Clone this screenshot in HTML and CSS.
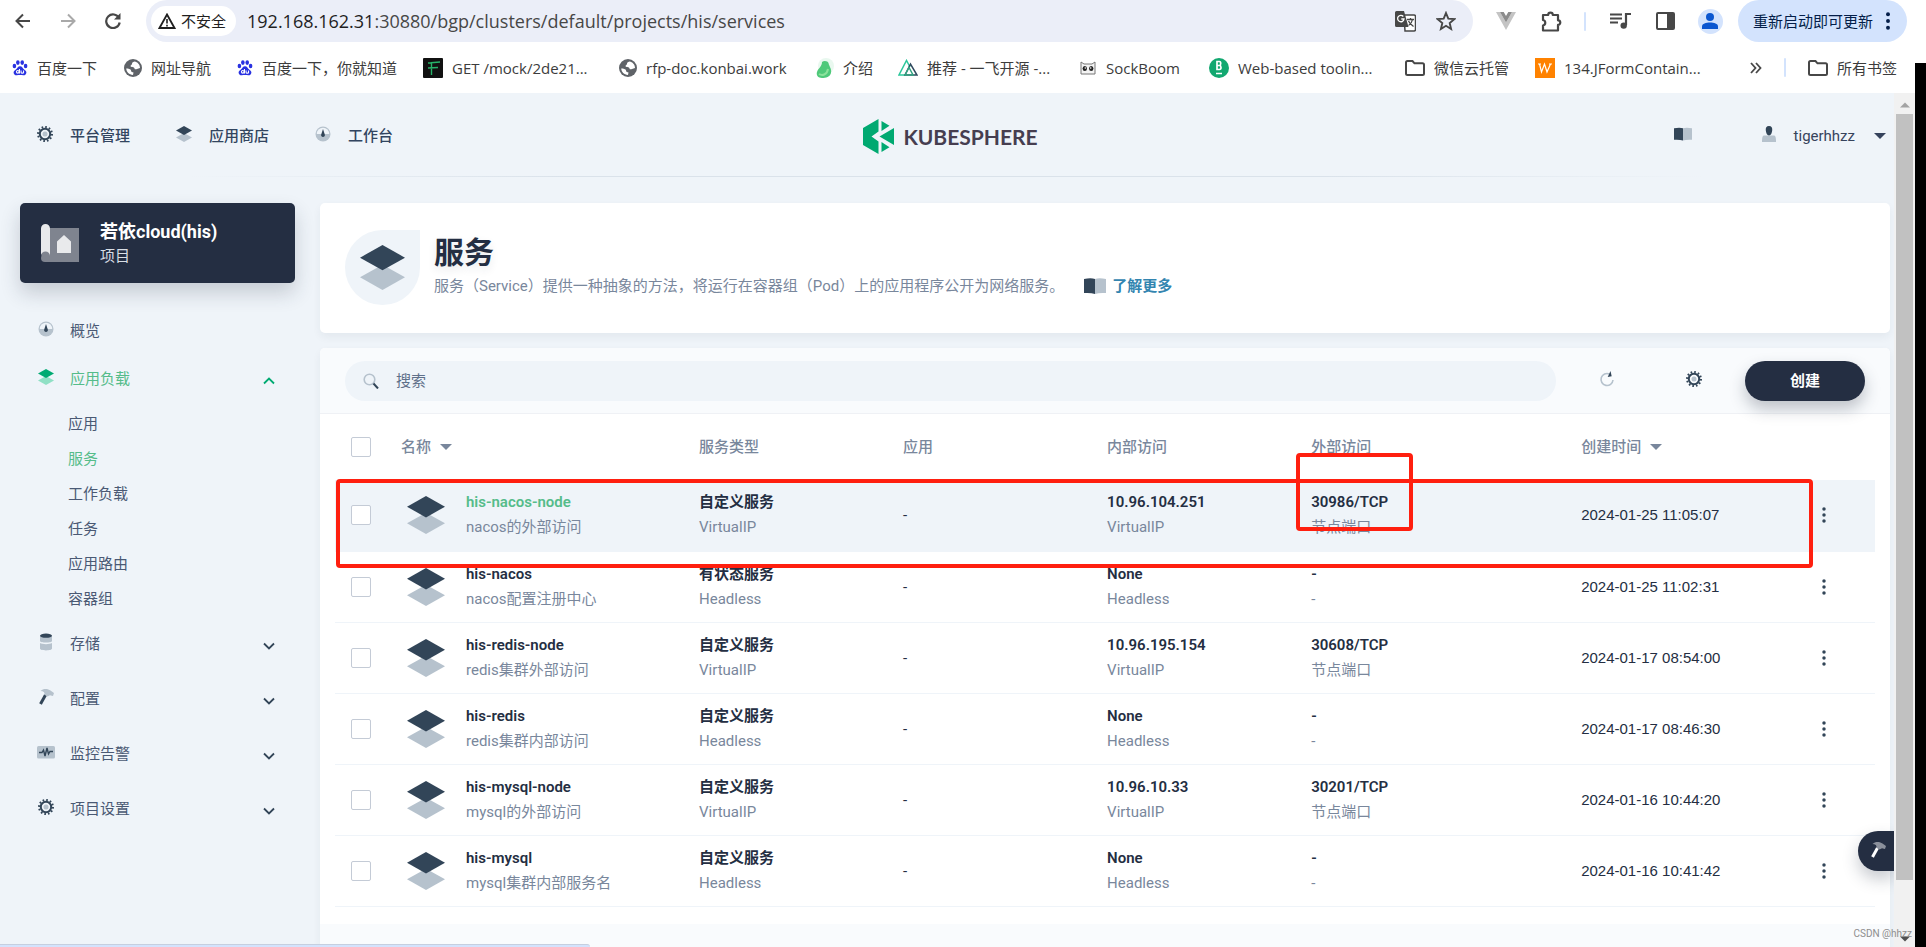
FILE: index.html
```html
<!DOCTYPE html>
<html lang="zh-CN">
<head>
<meta charset="utf-8">
<title>服务 - KubeSphere</title>
<link rel="stylesheet" href="styles.css">
</head>
<body>
<svg class="defs" aria-hidden="true">
  <symbol id="layers" viewBox="0 0 48 48"><path fill="var(--light)" d="M24 21 48 34.500 24 48 0 34.500z"/><path fill="var(--dark)" d="M24 0 48 13.500 24 27 0 13.500z"/></symbol>
  <symbol id="gear" viewBox="0 0 16 16"><circle cx="8" cy="8" r="7" fill="none" stroke="var(--dark)" stroke-width="2" stroke-dasharray="1.660 2.005"/><circle cx="8" cy="8" r="5.200" fill="none" stroke="var(--dark)" stroke-width="2"/><circle cx="8" cy="8" r="2.500" fill="var(--light)"/></symbol>
  <symbol id="dash" viewBox="0 0 16 16"><circle cx="8" cy="8" r="7.500" fill="var(--light)"/><path d="M1.800 8a6.200 6.200 0 0 1 12.400 0z" fill="#eff4f9"/><path d="M8 3l1.800 5.500a1.900 1.900 0 1 1-3.600 0z" fill="var(--dark)"/></symbol>
  <symbol id="book" viewBox="0 0 22 16"><path fill="var(--dark)" d="M0 1Q7-.5 11 1v15Q7 14.500 0 15z"/><path fill="var(--light)" d="M22 1q-7-1.500-11 0v15q4-1.500 11-1z"/></symbol>
  <symbol id="user" viewBox="0 0 16 16"><path fill="var(--light)" d="M3.500 9.500h9c2 0 2.500 1.500 2.500 6.500H1c0-5 .5-6.500 2.500-6.500z"/><path fill="var(--dark)" d="M8 0c2.600 0 3.600 2 3.200 4.500C10.900 7 10 9.500 8 9.500S5.100 7 4.800 4.500C4.400 2 5.400 0 8 0z"/></symbol>
  <symbol id="disk" viewBox="0 0 18 18"><path fill="var(--light)" d="M3 3v5c0 2 12 2 12 0V3zM3 10v5.500c0 2.500 12 2.500 12 0V10c-2 1.500-10 1.500-12 0z"/><ellipse cx="9" cy="2.700" rx="6" ry="2.100" fill="var(--dark)"/></symbol>
  <symbol id="hammer" viewBox="0 0 18 18"><path d="M8.500 7 3.500 16" stroke="var(--dark)" stroke-width="3"/><path fill="var(--light)" d="M3.500 3C6 .2 11 .5 13.500 2.500L17 5l-1 3-3-.8-2.500 1.300-3-1.800C8 4.500 6.500 3 3.500 3z"/></symbol>
  <symbol id="monitor" viewBox="0 0 18 18"><rect y="3" width="18" height="12.500" rx="1.500" fill="var(--light)"/><path d="M2 9.500h3L6.500 7 8 13 10 5l1.500 6L13 8.500h3" fill="none" stroke="var(--dark)" stroke-width="1.400"/></symbol>
  <symbol id="chev" viewBox="0 0 12 8"><path d="M1 1.500 6 6.500 11 1.500" fill="none" stroke="currentColor" stroke-width="1.800"/></symbol>
  <symbol id="caret" viewBox="0 0 12 6"><path d="M0 0h12L6 6z" fill="currentColor"/></symbol>
  <symbol id="dots" viewBox="0 0 16 16"><g fill="currentColor"><circle cx="8" cy="2" r="1.750"/><circle cx="8" cy="8" r="1.750"/><circle cx="8" cy="14" r="1.750"/></g></symbol>
  <symbol id="globe" viewBox="0 0 18 18"><circle cx="9" cy="9" r="9" fill="#5f6368"/><path fill="#fff" d="M10.500 2.500c-2 .5-2.500 1-2.500 2.500 0 1-1.500 1-1.500 2 0 1.500 4 .5 4 2.500 0 1 1.500 1 2.500.5s2-.5 3-1C16 5.500 13.500 3 10.500 2.500zM2.200 9.500C2.500 13 5 15.800 9 15.900l.5-2.400c-1-.5-2.500-.5-2.500-2C7 10 4 9.500 2.200 9.500z"/></symbol>
  <symbol id="folder" viewBox="0 0 20 16"><path d="M1 2.500C1 1.700 1.700 1 2.500 1H7.500l2 2.300h8c.9 0 1.500.6 1.500 1.500v8.700c0 .9-.6 1.500-1.500 1.500h-15C1.700 15 1 14.300 1 13.500z" fill="none" stroke="#474747" stroke-width="2"/></symbol>
  <symbol id="paw" viewBox="0 0 18 18"><g fill="#2932e1"><ellipse cx="2.700" cy="6.800" rx="2" ry="2.600"/><ellipse cx="6.600" cy="2.900" rx="2" ry="2.700"/><ellipse cx="11.500" cy="2.900" rx="2" ry="2.700"/><ellipse cx="15.300" cy="6.800" rx="2" ry="2.600"/><path d="M9 7c2.500 0 3 2.500 5 4s3 3 1.500 5-4 1-6.500 1-5 1-6.500-1-.5-3.500 1.500-5S6.500 7 9 7z"/></g><g fill="none" stroke="#fff" stroke-width="1.200"><circle cx="6.500" cy="13.300" r="1.500"/><path d="M8.400 10v5.200M10.200 11.700v2.500c0 1 2.800 1 2.800 0v-2.500"/></g></symbol>
</svg>

<div class="toolbar">
  <button class="tool" aria-label="后退"><svg width="16" height="16" viewBox="0 0 16 16"><path d="M15 8H2M8 1.500 1.500 8 8 14.500" fill="none" stroke="#474747" stroke-width="2"/></svg></button>
  <button class="tool" aria-label="前进"><svg width="16" height="16" viewBox="0 0 16 16"><path d="M1 8h13M8 1.500 14.500 8 8 14.500" fill="none" stroke="#a9a9a9" stroke-width="2"/></svg></button>
  <button class="tool" aria-label="重新加载"><svg width="16" height="16" viewBox="0 0 16 16"><path d="M14 5A6.800 6.800 0 1 0 14.700 9.500" fill="none" stroke="#474747" stroke-width="2.200"/><path d="M15.500 0v6.500H9z" fill="#474747"/></svg></button>
  <div class="omnibox">
    <button class="insecure"><svg width="18" height="16" viewBox="0 0 18 16"><path d="M9 1.500 16.500 15h-15z" fill="none" stroke="#1f1f1f" stroke-width="1.800"/><path d="M9 6v4.500M9 11.700v1.800" stroke="#1f1f1f" stroke-width="1.600"/></svg>不安全</button>
    <div class="url"><b>192.168.162.31</b>:30880/bgp/clusters/default/projects/his/services</div>
    <button class="omni-btn" aria-label="翻译"><svg width="21" height="21" viewBox="0 0 21 21"><path d="M9 4h10a1.500 1.500 0 0 1 1.500 1.500v13A1.500 1.500 0 0 1 19 20H10z" fill="#fff" stroke="#474747" stroke-width="1.500"/><path d="M1.500 0H9l4.500 16h-12A1.500 1.500 0 0 1 0 14.500v-13A1.500 1.500 0 0 1 1.500 0z" fill="#474747"/><path d="M8.300 5.500A3.200 3.200 0 1 0 9 8H6.300" fill="none" stroke="#fff" stroke-width="1.300"/><path d="M12 8.500h7M15.500 7v1.500M17.500 8.500c-.5 3-2.500 5-4 6M13.500 10c1 2.500 3 4 5 5.500" fill="none" stroke="#474747" stroke-width="1.300"/></svg></button>
    <button class="omni-btn" aria-label="收藏"><svg width="20" height="20" viewBox="0 0 20 20"><path d="M10 2l2.300 5.600 6 .5-4.600 4 1.400 5.900-5.100-3.200L4.900 18l1.400-5.900-4.600-4 6-.5z" fill="none" stroke="#474747" stroke-width="1.900"/></svg></button>
  </div>
  <button class="tool" aria-label="Vue"><svg width="20" height="18" viewBox="0 0 20 18"><path d="M0 0h4l6 10.500L16 0h4L10 18z" fill="#c4c4c4"/><path d="M4 0h3.700L10 4l2.300-4H16l-6 10.500z" fill="#8c8c8c"/></svg></button>
  <button class="tool" aria-label="扩展程序"><svg width="21" height="21" viewBox="0 0 21 21"><path d="M2 4h5.200a2.300 2.300 0 0 1 4.600 0H17v5.300a2.300 2.300 0 0 1 0 4.600V19.500H2v-5a2.800 2.800 0 0 0 0-5.500z" fill="none" stroke="#474747" stroke-width="2.200" stroke-linejoin="round"/></svg></button>
  <i class="sep"></i>
  <button class="tool" aria-label="媒体"><svg width="21" height="16" viewBox="0 0 21 16"><path d="M0 1.500h12M0 5.500h12M0 9.500h8" stroke="#474747" stroke-width="2"/><path d="M16 12V1h5" fill="none" stroke="#474747" stroke-width="2.200"/><circle cx="13.700" cy="12.600" r="3.200" fill="#474747"/></svg></button>
  <button class="tool" aria-label="侧边栏"><svg width="19" height="18" viewBox="0 0 19 18"><rect x="1" y="1" width="17" height="16" rx="1" fill="none" stroke="#474747" stroke-width="2"/><path d="M11 1h7v16h-7z" fill="#474747"/></svg></button>
  <button class="tool avatar" aria-label="个人资料"><svg width="16" height="16" viewBox="0 0 16 16"><circle cx="8" cy="4" r="4" fill="#0b57d0"/><path d="M0 16v-2.500C0 10.500 4 9.500 8 9.500s8 1 8 4V16z" fill="#0b57d0"/></svg></button>
  <button class="update">重新启动即可更新<svg width="18" height="18"><use href="#dots"/></svg></button>
</div>

<nav class="bookmarks" aria-label="书签">
  <a href="#"><svg width="16" height="18"><use href="#paw"/></svg>百度一下</a>
  <a href="#"><svg width="18" height="18"><use href="#globe"/></svg>网址导航</a>
  <a href="#"><svg width="16" height="18"><use href="#paw"/></svg>百度一下，你就知道</a>
  <a href="#"><svg width="20" height="20" viewBox="0 0 20 20"><rect width="20" height="20" rx="1" fill="#111"/><path d="M5 5l12-1M8.500 4v13M5 10l10-.5" stroke="#27b36a" stroke-width="1.400" fill="none"/></svg>GET /mock/2de21...</a>
  <a href="#"><svg width="18" height="18"><use href="#globe"/></svg>rfp-doc.konbai.work</a>
  <a href="#"><svg width="18" height="20" viewBox="0 0 18 20"><circle cx="10" cy="8" r="8" fill="#e9f8ef"/><path d="M6 4c2-2 6-1 6.500 1 .5 3 3.500 6 2.500 10s-5 5-9 5-6-3-5-6c1-4 5-5 5-10z" fill="#4fc97a"/><path d="M3 16c3 2 8 1 9-5" fill="none" stroke="#8be29b" stroke-width="2"/></svg>介绍</a>
  <a href="#"><svg width="20" height="17" viewBox="0 0 20 17"><g fill="none" stroke-width="1.500"><path d="M7 16H1L8.500 1.500 12 8" stroke="#2cc79b"/><path d="M7 16l5.500-11L19 16z" stroke="#2f495e"/><path d="M7 16l4-7.500L15 16z" stroke="#32a582"/></g></svg>推荐 - 一飞开源 -...</a>
  <a href="#"><svg width="18" height="18" viewBox="0 0 18 18"><path d="M2 15V3l3 2h8l3-2v12z" fill="#f4f4f4" stroke="#777" stroke-width="1"/><ellipse cx="5.800" cy="9.500" rx="2.200" ry="2.600" fill="#222"/><ellipse cx="12.200" cy="9.500" rx="2.200" ry="2.600" fill="#222"/><circle cx="6.300" cy="9" r=".8" fill="#fff"/><circle cx="11.700" cy="9" r=".8" fill="#fff"/></svg>SockBoom</a>
  <a href="#"><svg width="20" height="20" viewBox="0 0 20 20"><circle cx="10" cy="10" r="10" fill="#12a870"/><path d="M8 3.500v8h2.500c2 0 2-3.800 0-4 1.600-.2 1.600-4 0-4zM8 7.500h2.500M7 15.500h6" fill="none" stroke="#fff" stroke-width="1.700"/></svg>Web-based toolin...</a>
  <a href="#"><svg width="20" height="16"><use href="#folder"/></svg>微信云托管</a>
  <a href="#"><svg width="20" height="20" viewBox="0 0 20 20"><rect width="20" height="20" fill="#ff8200"/><path d="M3 6h3M4.500 6l2 8L9.500 6l2.500 8 3.500-8M14 6h3" fill="none" stroke="#fff" stroke-width="1.200"/></svg>134.JFormContain...</a>
  <span class="bookmarks-end">
    <button class="more" aria-label="更多书签"><svg width="12" height="12" viewBox="0 0 12 12"><path d="M1 1l4.500 5L1 11M6 1l4.500 5L6 11" fill="none" stroke="#474747" stroke-width="1.800"/></svg></button>
    <i class="sep"></i>
    <a href="#"><svg width="20" height="16"><use href="#folder"/></svg>所有书签</a>
  </span>
</nav>

<div class="viewport">
  <div class="page">
    <header class="header">
      <nav class="topnav">
        <a href="#"><svg width="16" height="16"><use href="#gear"/></svg>平台管理</a>
        <a href="#"><svg width="16" height="16"><use href="#layers"/></svg>应用商店</a>
        <a href="#"><svg width="16" height="16"><use href="#dash"/></svg>工作台</a>
      </nav>
      <a class="logo" href="#"><svg width="31" height="35" viewBox="0 0 31 35"><path fill="#00a971" d="M15.500 0v12.500L8.500 17.500l7 5V35L0 26V9zM18.500 2l8 4.800-8 5.200zM31 9v17L16.500 17.500zM18.500 23l8 5.200-8 4.800z"/></svg>KUBESPHERE</a>
      <div class="account">
        <a href="#" aria-label="文档"><svg width="18" height="14"><use href="#book"/></svg></a>
        <button class="user"><svg class="user-icon" width="16" height="16"><use href="#user"/></svg>tigerhhzz<svg class="user-caret" width="12" height="6"><use href="#caret"/></svg></button>
      </div>
    </header>

    <div class="columns">
      <aside class="sidebar">
        <a class="project" href="#">
          <svg width="38" height="38" viewBox="0 0 38 38"><path fill="#7f848f" d="M6 4h32v34H4a4 4 0 0 1-4-4z"/><path fill="#e9eaec" d="M0 4.500a4.500 4.500 0 0 1 9 0V32a4.500 4.500 0 0 0-9 0zM23 11l7 6.500V29H16V17.500z"/></svg>
          <span><strong>若依cloud(his)</strong><small>项目</small></span>
        </a>
        <ul class="menu">
          <li><a class="item" href="#"><svg width="16" height="16"><use href="#dash"/></svg>概览</a></li>
          <li class="open"><a class="item" href="#"><svg width="16" height="16"><use href="#layers"/></svg>应用负载<svg class="chev" width="12" height="8"><use href="#chev"/></svg></a>
            <ul class="submenu">
              <li><a href="#">应用</a></li>
              <li><a class="active" href="#">服务</a></li>
              <li><a href="#">工作负载</a></li>
              <li><a href="#">任务</a></li>
              <li><a href="#">应用路由</a></li>
              <li><a href="#">容器组</a></li>
            </ul>
          </li>
          <li class="group"><a class="item" href="#"><svg width="18" height="18"><use href="#disk"/></svg>存储<svg class="chev" width="12" height="8"><use href="#chev"/></svg></a></li>
          <li class="group"><a class="item" href="#"><svg width="18" height="18"><use href="#hammer"/></svg>配置<svg class="chev" width="12" height="8"><use href="#chev"/></svg></a></li>
          <li class="group"><a class="item" href="#"><svg width="18" height="18"><use href="#monitor"/></svg>监控告警<svg class="chev" width="12" height="8"><use href="#chev"/></svg></a></li>
          <li class="group"><a class="item" href="#"><svg width="16" height="16"><use href="#gear"/></svg>项目设置<svg class="chev" width="12" height="8"><use href="#chev"/></svg></a></li>
        </ul>
      </aside>

      <main class="main">
        <section class="banner">
          <div class="banner-icon"><svg width="45" height="45" viewBox="0 0 48 48"><use href="#layers"/></svg></div>
          <div class="banner-text">
            <h1>服务</h1>
            <p>服务（Service）提供一种抽象的方法，将运行在容器组（Pod）上的应用程序公开为网络服务。<a href="#"><svg width="22" height="16"><use href="#book"/></svg>了解更多</a></p>
          </div>
        </section>

        <section class="card">
          <div class="filters">
            <label class="search"><svg width="16" height="16" viewBox="0 0 16 16"><circle cx="6.500" cy="6.500" r="5.300" fill="none" stroke="#b6c2cd" stroke-width="1.600"/><path d="M10.500 10.500l4.500 5" stroke="#324558" stroke-width="2"/></svg><input type="text" placeholder="搜索" aria-label="搜索"></label>
            <button class="icon-btn" aria-label="刷新"><svg width="16" height="16" viewBox="0 0 16 16"><path d="M10.500 3A6 6 0 1 0 14 9" fill="none" stroke="#b6c2cd" stroke-width="1.600"/><path d="M11.500 0l1.200 5.200L8.700 6z" fill="#324558"/></svg></button>
            <button class="icon-btn" aria-label="设置"><svg width="16" height="16"><use href="#gear"/></svg></button>
            <button class="create">创建</button>
          </div>

          <table class="services">
            <colgroup><col class="c-check"><col class="c-name"><col class="c-mid"><col class="c-mid"><col class="c-mid"><col class="c-ext"><col><col class="c-more"></colgroup>
            <thead>
              <tr><th><input type="checkbox" aria-label="全选"></th><th>名称<svg width="12" height="6"><use href="#caret"/></svg></th><th>服务类型</th><th>应用</th><th>内部访问</th><th>外部访问</th><th>创建时间<svg width="12" height="6"><use href="#caret"/></svg></th><th></th></tr>
            </thead>
            <tbody>
              <tr class="selected"><td><input type="checkbox" aria-label="his-nacos-node"></td><td><div class="name"><svg width="38" height="38"><use href="#layers"/></svg><div><a href="#">his-nacos-node</a><small>nacos的外部访问</small></div></div></td><td><b>自定义服务</b><small>VirtualIP</small></td><td>-</td><td><b>10.96.104.251</b><small>VirtualIP</small></td><td><b>30986/TCP</b><small>节点端口</small></td><td class="time">2024-01-25 11:05:07</td><td><button class="row-more" aria-label="更多"><svg width="16" height="16"><use href="#dots"/></svg></button></td></tr>
              <tr><td><input type="checkbox" aria-label="his-nacos"></td><td><div class="name"><svg width="38" height="38"><use href="#layers"/></svg><div><a href="#">his-nacos</a><small>nacos配置注册中心</small></div></div></td><td><b>有状态服务</b><small>Headless</small></td><td>-</td><td><b>None</b><small>Headless</small></td><td><b>-</b><small>-</small></td><td class="time">2024-01-25 11:02:31</td><td><button class="row-more" aria-label="更多"><svg width="16" height="16"><use href="#dots"/></svg></button></td></tr>
              <tr><td><input type="checkbox" aria-label="his-redis-node"></td><td><div class="name"><svg width="38" height="38"><use href="#layers"/></svg><div><a href="#">his-redis-node</a><small>redis集群外部访问</small></div></div></td><td><b>自定义服务</b><small>VirtualIP</small></td><td>-</td><td><b>10.96.195.154</b><small>VirtualIP</small></td><td><b>30608/TCP</b><small>节点端口</small></td><td class="time">2024-01-17 08:54:00</td><td><button class="row-more" aria-label="更多"><svg width="16" height="16"><use href="#dots"/></svg></button></td></tr>
              <tr><td><input type="checkbox" aria-label="his-redis"></td><td><div class="name"><svg width="38" height="38"><use href="#layers"/></svg><div><a href="#">his-redis</a><small>redis集群内部访问</small></div></div></td><td><b>自定义服务</b><small>Headless</small></td><td>-</td><td><b>None</b><small>Headless</small></td><td><b>-</b><small>-</small></td><td class="time">2024-01-17 08:46:30</td><td><button class="row-more" aria-label="更多"><svg width="16" height="16"><use href="#dots"/></svg></button></td></tr>
              <tr><td><input type="checkbox" aria-label="his-mysql-node"></td><td><div class="name"><svg width="38" height="38"><use href="#layers"/></svg><div><a href="#">his-mysql-node</a><small>mysql的外部访问</small></div></div></td><td><b>自定义服务</b><small>VirtualIP</small></td><td>-</td><td><b>10.96.10.33</b><small>VirtualIP</small></td><td><b>30201/TCP</b><small>节点端口</small></td><td class="time">2024-01-16 10:44:20</td><td><button class="row-more" aria-label="更多"><svg width="16" height="16"><use href="#dots"/></svg></button></td></tr>
              <tr><td><input type="checkbox" aria-label="his-mysql"></td><td><div class="name"><svg width="38" height="38"><use href="#layers"/></svg><div><a href="#">his-mysql</a><small>mysql集群内部服务名</small></div></div></td><td><b>自定义服务</b><small>Headless</small></td><td>-</td><td><b>None</b><small>Headless</small></td><td><b>-</b><small>-</small></td><td class="time">2024-01-16 10:41:42</td><td><button class="row-more" aria-label="更多"><svg width="16" height="16"><use href="#dots"/></svg></button></td></tr>
            </tbody>
          </table>
          <div class="card-footer"></div>
          <div class="mark mark-row"></div>
          <div class="mark mark-port"></div>
        </section>
      </main>
    </div>
    <button class="toolbox" aria-label="工具箱"><svg width="18" height="18"><use href="#hammer"/></svg></button>
  </div>
  <div class="scrollbar"><svg width="10" height="6" viewBox="0 0 12 6"><path d="M0 6h12L6 0z" fill="#a3a3a3"/></svg><div class="thumb"></div><div class="track"></div><svg width="10" height="6" viewBox="0 0 12 6"><path d="M0 0h12L6 6z" fill="#505050"/></svg></div>
</div>
<div class="status"></div>
<div class="edge"></div>
<div class="watermark">CSDN @hhzz</div>
</body>
</html>
```

FILE: styles.css
```css
:root {
  --dark: #324558;
  --light: #b6c2cd;
  --ink: #242e42;
  --muted: #79879c;
  --green: #55bc8a;
}
* { box-sizing: border-box; }
body {
  margin: 0;
  height: 100vh;
  display: flex;
  flex-direction: column;
  position: relative;
  overflow: hidden;
  background: #fff;
  color: var(--ink);
  font: 15px/24px Roboto, "Noto Sans CJK SC", sans-serif;
}
a { color: inherit; text-decoration: none; }
button { border: 0; padding: 0; background: none; color: inherit; font: inherit; }
ul { list-style: none; margin: 0; padding: 0; }
svg { display: block; flex: none; }
.defs { position: absolute; width: 0; height: 0; }

/* browser toolbar */
.toolbar {
  display: flex;
  align-items: center;
  height: 42px;
  flex: none;
  padding: 0 19px 0 0;
  color: #1f1f1f;
  font-family: "Open Sans", "Noto Sans CJK SC", sans-serif;
}
.tool { width: 45px; height: 32px; display: grid; place-items: center; flex: none; }
.tool:nth-child(3) { margin-right: 11px; }
.toolbar .sep { margin: 0 12px 0 10px; }
.omnibox {
  flex: 1;
  display: flex;
  align-items: center;
  height: 42px;
  padding: 0 7px 0 5px;
  margin-right: 11px;
  border-radius: 21px;
  background: #ebeef8;
}
.insecure {
  display: flex;
  align-items: center;
  gap: 5px;
  height: 30px;
  padding: 0 10px 0 7px;
  border-radius: 15px;
  background: #fff;
}
.url { flex: 1; padding-left: 11px; font-size: 18px; color: #474747; }
.url b { font-weight: 400; color: #1f1f1f; }
.omni-btn { width: 40px; height: 32px; display: grid; place-items: center; }
.sep { width: 2px; height: 19px; border-radius: 1px; background: #d3e3fd; flex: none; }
.avatar { width: 25px; height: 25px; margin: 0 15px 0 10px; border-radius: 50%; background: #d3e3fd; }
.update {
  display: flex;
  align-items: center;
  gap: 6px;
  height: 42px;
  padding: 0 10px 0 15px;
  border-radius: 21px;
  background: #d3e3fd;
  color: #041e49;
}

/* bookmarks */
.bookmarks {
  flex: none;
  height: 51px;
  padding: 0 29px 0 12px;
  display: grid;
  grid-template-columns: 112px 113px 186px 196px 197px 82px 181px 130px 196px 130px 1fr auto;
  align-items: center;
  color: #3c3c3c;
  font-family: "Open Sans", "Noto Sans CJK SC", sans-serif;
}
.bookmarks a, .bookmarks-end { display: flex; align-items: center; gap: 9px; white-space: nowrap; }
.bookmarks-end { gap: 22px; }

/* page frame */
.viewport { flex: 1; min-height: 0; display: flex; padding-right: 11px; background: #eff4f9; }
.page { flex: 1; min-width: 0; position: relative; overflow: hidden; }
.scrollbar { width: 21px; display: flex; flex-direction: column; align-items: center; padding: 9px 0 5px; background: #f1f1f1; }
.thumb { flex: 765 1 0; width: 17px; margin-top: 6px; background: #c1c1c1; }
.track { flex: 56 1 0; }

.header {
  display: grid;
  grid-template-columns: 1fr auto 1fr;
  align-items: center;
  height: 84px;
  padding: 2px 0 0 7px;
  background: linear-gradient(to right, transparent 10%, #dae2ea 30%, #dae2ea 70%, transparent 90%) bottom / 100% 1px no-repeat;
}
.topnav { display: flex; gap: 46px; padding-left: 30px; }
.topnav a { display: flex; align-items: center; gap: 17px; color: #324560; font-weight: 500; }
.topnav svg, .item > svg:first-child, .account a, .user-icon { margin-bottom: 4px; }
.logo {
  display: flex;
  align-items: center;
  gap: 9px;
  color: #463e50;
  font: 700 21px/35px Lato, sans-serif;
}
.account { display: flex; justify-content: flex-end; align-items: center; gap: 69px; padding-right: 8px; color: #36435c; }
.user { display: flex; align-items: center; }
.user-icon { margin-right: 17px; }
.user-caret { margin-left: 19px; }

.columns { display: flex; gap: 25px; padding: 26px 4px 0 20px; }
.sidebar { width: 275px; flex: none; }
.project {
  display: flex;
  align-items: center;
  gap: 21px;
  height: 80px;
  padding: 0 21px;
  border-radius: 5px;
  background: var(--ink);
  color: #fff;
  box-shadow: 0 10px 20px rgba(36, 46, 66, .2);
}
.project strong { display: block; font-size: 18px; line-height: 25px; }
.project small { display: block; font-size: 15px; color: #d8dee5; }
.menu { padding: 24px 20px 0 17px; color: #4a5974; }
.item { display: flex; align-items: center; height: 48px; }
.item > svg:first-child { width: 18px; margin-right: 15px; }
.chev { margin: 4px 0 0 auto; color: var(--dark); }
.open .item { --dark: #00aa72; --light: #90e0c5; color: var(--green); }
.open .chev { rotate: 180deg; }
.submenu { padding: 4px 0 3px 31px; line-height: 35px; }
.submenu a { display: block; }
.submenu .active { color: var(--green); }
.group + .group { margin-top: 7px; }

/* content */
.main { flex: 1; min-width: 0; }
.banner {
  display: flex;
  gap: 14px;
  padding: 27px 25px 28px;
  margin-bottom: 15px;
  border-radius: 5px;
  background: #fff;
  box-shadow: 0 4px 8px rgba(36, 46, 66, .06);
}
.banner-icon { width: 75px; height: 75px; display: grid; place-items: center; border-radius: 50% 0 50% 50%; background: #eff4f9; }
.banner-text { padding-top: 2px; }
.banner h1 { margin: 0; font-size: 30px; line-height: 42px; text-shadow: 0 4px 8px rgba(36, 46, 66, .1); }
.banner p { margin: 0; display: flex; color: var(--muted); }
.banner p a { display: flex; align-items: center; gap: 6px; margin-left: 20px; color: #3385b0; font-weight: 700; }

.card { position: relative; border-radius: 5px; background: #fff; box-shadow: 0 4px 8px rgba(36, 46, 66, .06); }
.filters {
  display: flex;
  align-items: center;
  gap: 15px;
  padding: 13px 25px 12px;
  border-bottom: 1px solid #eff1f5;
  border-radius: 5px 5px 0 0;
  background: #f9fbfd;
}
.search { flex: 1; display: flex; align-items: center; gap: 17px; height: 40px; padding: 0 18px; border-radius: 20px; background: #eff4f9; }
.search input { flex: 1; border: 0; padding: 0; outline: 0; background: none; color: var(--ink); font: inherit; }
.search input::placeholder { color: #5f708a; opacity: 1; }
.icon-btn { width: 72px; height: 32px; display: grid; place-items: center; padding-bottom: 4px; }
.create {
  width: 120px;
  height: 40px;
  border-radius: 20px;
  background: var(--ink);
  color: #fff;
  font-weight: 700;
  box-shadow: 0 8px 16px rgba(36, 46, 66, .28);
}

.services { width: calc(100% - 30px); margin: 0 15px; table-layout: fixed; border-collapse: collapse; }
.c-check { width: 66px; }
.c-name { width: 298px; }
.c-mid { width: 13.250%; }
.c-ext { width: 270px; }
.c-more { width: 59px; }
.services th { height: 66px; padding: 0; text-align: left; color: var(--muted); font-weight: 500; }
.services th svg { display: inline-block; margin-left: 9px; vertical-align: 2px; }
.services td { height: 71px; padding: 0; border-bottom: 1px solid #eff4f9; }
.services td:first-child, .services th:first-child { padding-left: 16px; }
.services input {
  appearance: none;
  display: block;
  width: 20px;
  height: 20px;
  margin: 0;
  border: 1px solid #c4cbd6;
  border-radius: 2px;
  background: #fff;
}
.services b, .services td a, .services small { display: block; font-size: 15px; line-height: 25px; }
.services b { font-weight: 600; }
.services td a { font-weight: 600; }
.services small { color: var(--muted); }
.selected { background: #eff4f9; }
.selected td a { color: var(--green); }
.name { display: flex; align-items: center; gap: 21px; padding-left: 6px; }
.services .time { font-family: "Liberation Sans", "Noto Sans CJK SC", sans-serif; }
.row-more { display: block; color: var(--dark); }
.card-footer { height: 80px; margin-top: 17px; background: #f9fbfd; }

.mark { position: absolute; border: 4px solid #ff1f0f; border-radius: 4px; }
.mark-row { left: 16px; right: 77px; top: 131px; height: 89px; }
.mark-port { left: 976px; top: 105px; width: 117px; height: 78px; }

.toolbox {
  --dark: #fff;
  --light: #8b909b;
  position: absolute;
  right: 0;
  bottom: 76px;
  width: 36px;
  height: 40px;
  padding: 0 0 3px 11px;
  border-radius: 20px 0 0 20px;
  background: var(--ink);
  box-shadow: 0 8px 16px rgba(36, 46, 66, .25);
}
.status { position: absolute; left: 0; bottom: 0; width: 590px; height: 3px; border-top: 1px solid #c6cfdf; border-radius: 0 3px 0 0; background: #d3e3fd; }
.edge { position: absolute; right: 0; top: 63px; bottom: 0; width: 11px; background: #000; }
.watermark { position: absolute; right: 14px; bottom: 3px; color: #8e8e8e; font-size: 10px; line-height: 20px; }
```
